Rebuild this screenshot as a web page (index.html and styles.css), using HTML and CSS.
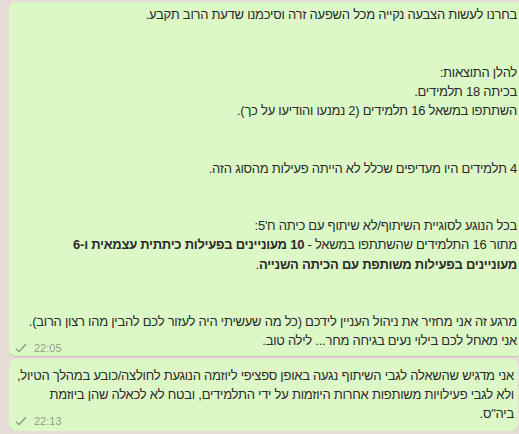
FILE: index.html
```html
<!DOCTYPE html>
<html lang="he">
<head>
    <meta charset="UTF-8">
    <meta name="viewport" content="width=device-width, initial-scale=1.0">
    <title>צ'אט כיתה</title>
    <link rel="stylesheet" href="styles.css">
</head>
<body>
    <div class="chat">
        <div class="bubble first">
            <div class="text">
                בחרנו לעשות הצבעה נקייה מכל השפעה זרה וסיכמנו שדעת הרוב תקבע.<br><br><br>
                להלן התוצאות:<br>
                בכיתה 18 תלמידים.<br>
                השתתפו במשאל 16 תלמידים (2 נמנעו והודיעו על כך).<br><br><br>
                4 תלמידים היו מעדיפים שכלל לא הייתה פעילות מהסוג הזה.<br><br><br>
                בכל הנוגע לסוגיית השיתוף/לא שיתוף עם כיתה ח'5:<br>
                מתור 16 התלמידים שהשתתפו במשאל - <b>10 מעוניינים בפעילות כיתתית עצמאית ו-6<br>
                מעוניינים בפעילות משותפת עם הכיתה השנייה</b>.<br><br><br>
                מרגע זה אני מחזיר את ניהול העניין לידכם (כל מה שעשיתי היה לעזור לכם להבין מהו רצון הרוב).<br>
                אני מאחל לכם בילוי נעים בגיחה מחר... לילה טוב.
            </div>
            <div class="meta">
                <svg class="tick" width="12" height="10" viewBox="0 0 12 10"><path d="M1 5.6 L4 8.6 L11 1.2" fill="none" stroke="currentColor" stroke-width="1.3"/></svg>
                <span>22:05</span>
            </div>
        </div>
        <div class="bubble second">
            <div class="text">
                אני מדגיש שהשאלה לגבי השיתוף נגעה באופן ספציפי ליוזמה הנוגעת לחולצה/כובע במהלך הטיול,<br>
                ולא לגבי פעילויות משותפות אחרות היוזמות על ידי התלמידים, ובטח לא לכאלה שהן ביוזמת<br>
                ביה"ס.
            </div>
            <div class="meta">
                <svg class="tick" width="12" height="10" viewBox="0 0 12 10"><path d="M1 5.6 L4 8.6 L11 1.2" fill="none" stroke="currentColor" stroke-width="1.3"/></svg>
                <span>22:13</span>
            </div>
        </div>
    </div>
</body>
</html>
```

FILE: styles.css
```css
body {
    margin: 0;
    background: #e6ded6;
    font-family: "Liberation Sans", Arial, sans-serif;
    overflow: hidden;
}
.chat {
    display: flex;
    flex-direction: column;
    gap: 3px;
    padding: 2px 0 0 9px;
}
.bubble {
    direction: rtl;
    background: #dcf8c6;
    border-radius: 7px;
    box-shadow: 0 1px 0.5px rgba(0,0,0,0.13);
    padding: 3px 6px 0 9px;
}
.first {
    margin-right: -4px;
}
.second {
    margin-right: 1px;
    padding: 7px 4px 3px 6px;
}
.text {
    font-size: 13px;
    letter-spacing: -0.25px;
    line-height: 19.2px;
    color: #2a2a2a;
    white-space: nowrap;
}
.text b {
    font-weight: bold;
}
.meta {
    direction: ltr;
    display: flex;
    align-items: center;
    gap: 7px;
    height: 15px;
    margin-top: -10px;
    margin-left: -3px;
    font-size: 11px;
    color: rgba(0,0,0,0.4);
}
.second .meta {
    margin-left: 0;
}
.tick {
    display: block;
}
```
